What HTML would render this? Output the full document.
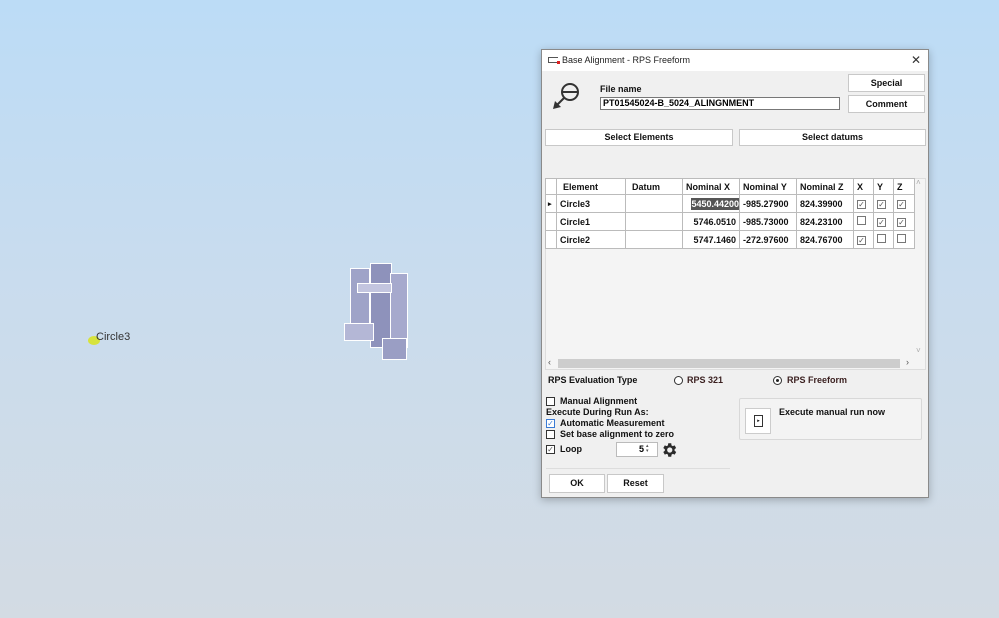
<!DOCTYPE html>
<html><head><meta charset="utf-8">
<style>
*{box-sizing:border-box;margin:0;padding:0}
body{width:999px;height:618px;overflow:hidden;position:relative;font-family:"Liberation Sans",Arial,sans-serif;background:linear-gradient(180deg,#bcdcf6 0%,#c9dcee 45%,#d3dbe3 100%);}
.abs{position:absolute}
.dlg{left:541px;top:49px;width:388px;height:449px;background:#f0f0f0;border:1px solid #8a8a8a;box-shadow:0 2px 8px rgba(0,0,0,.25)}
.title{left:0;top:0;width:386px;height:21px;background:#fff;font-size:9px;color:#222}
.btn{position:absolute;background:#fff;border:1px solid #c8c8c8;font-size:9px;font-weight:bold;text-align:center;color:#111}
.b{font-weight:bold;font-size:9px;color:#111}
.cb{position:absolute;width:9px;height:9px;border:1px solid #333;background:#fff}
table{border-collapse:collapse;font-size:9px;font-weight:bold;color:#111}
td{border:1px solid #bbb;height:18px;padding:0 3px;background:#fff;white-space:nowrap;overflow:hidden}
th{border:1px solid #bbb;height:16px;background:#fff;font-weight:bold;text-align:left;padding:0 6px}
.ck{display:inline-block;width:9px;height:9px;border:1px solid #777;font-size:8px;line-height:7px;text-align:center;color:#555;font-weight:normal}
</style></head><body>
<!-- 3D part -->
<div class="abs" style="left:342px;top:258px;width:70px;height:105px">
 <div class="abs" style="left:8px;top:10px;width:20px;height:70px;background:#9fa3c8;border:1px solid #fff"></div>
 <div class="abs" style="left:28px;top:5px;width:22px;height:85px;background:#8e92bb;border:1px solid #fff"></div>
 <div class="abs" style="left:48px;top:15px;width:18px;height:75px;background:#a6a9cd;border:1px solid #fff"></div>
 <div class="abs" style="left:2px;top:65px;width:30px;height:18px;background:#b4b7d6;border:1px solid #fff"></div>
 <div class="abs" style="left:40px;top:80px;width:25px;height:22px;background:#9a9ec4;border:1px solid #fff"></div>
 <div class="abs" style="left:15px;top:25px;width:35px;height:10px;background:#c3c5df;border:1px solid #fff"></div>
</div>
<div class="abs" style="left:88px;top:336px;width:12px;height:9px;border-radius:50%;background:#d7e33c"></div>
<div class="abs" style="left:96px;top:331px;font-size:11px;color:#333">Circle3</div>

<div class="abs dlg">
 <div class="abs title">
  <div class="abs" style="left:6px;top:7px;width:10px;height:6px;border:1px solid #555;border-right:none"></div>
  <div class="abs" style="left:15px;top:11px;width:3px;height:3px;background:#d22"></div>
  <div class="abs" style="left:20px;top:5px">Base Alignment - RPS Freeform</div>
  <div class="abs" style="left:369px;top:3px;font-size:12px;color:#333">✕</div>
 </div>
 <svg class="abs" style="left:10px;top:30px" width="32" height="32" viewBox="0 0 32 32"><circle cx="18" cy="12" r="8" fill="none" stroke="#333" stroke-width="2"/><line x1="11" y1="12" x2="25" y2="12" stroke="#333" stroke-width="2"/><line x1="12" y1="18" x2="3" y2="27" stroke="#333" stroke-width="2"/><path d="M1 29 L3 21 L9 27 Z" fill="#333"/></svg>
 <div class="abs b" style="left:58px;top:34px">File name</div>
 <div class="abs" style="left:58px;top:47px;width:240px;height:13px;background:#fff;border:1px solid #777;font-size:9px;font-weight:bold;padding-left:2px;line-height:11px">PT01545024-B_5024_ALINGNMENT</div>
 <div class="btn" style="left:306px;top:24px;width:77px;height:18px;line-height:16px">Special</div>
 <div class="btn" style="left:306px;top:45px;width:77px;height:18px;line-height:16px">Comment</div>
 <div class="btn" style="left:3px;top:79px;width:188px;height:17px;line-height:15px">Select Elements</div>
 <div class="btn" style="left:197px;top:79px;width:187px;height:17px;line-height:15px">Select datums</div>
 <div class="abs" style="left:3px;top:128px;width:381px;height:192px;background:#f4f4f4;border:1px solid #ddd"></div>
 <table class="abs" style="left:3px;top:128px;table-layout:fixed;width:369px">
  <colgroup><col style="width:11px"><col style="width:69px"><col style="width:57px"><col style="width:57px"><col style="width:57px"><col style="width:57px"><col style="width:20px"><col style="width:20px"><col style="width:21px"></colgroup>
  <tr><th></th><th>Element</th><th>Datum</th><th style="padding:0 3px">Nominal X</th><th style="padding:0 3px">Nominal Y</th><th style="padding:0 3px">Nominal Z</th><th style="padding:0 3px">X</th><th style="padding:0 3px">Y</th><th style="padding:0 3px">Z</th></tr>
  <tr><td style="font-size:7px;padding:0 2px">▸</td><td>Circle3</td><td></td><td style="padding:0;text-align:right"><span style="background:#555;color:#fff;padding:1px 0">5450.44200</span></td><td>-985.27900</td><td>824.39900</td><td><span class="ck">✓</span></td><td><span class="ck">✓</span></td><td><span class="ck">✓</span></td></tr>
  <tr><td></td><td>Circle1</td><td></td><td style="text-align:right">5746.0510</td><td>-985.73000</td><td>824.23100</td><td><span class="ck"></span></td><td><span class="ck">✓</span></td><td><span class="ck">✓</span></td></tr>
  <tr><td></td><td>Circle2</td><td></td><td style="text-align:right">5747.1460</td><td>-272.97600</td><td>824.76700</td><td><span class="ck">✓</span></td><td><span class="ck"></span></td><td><span class="ck"></span></td></tr>
 </table>
 <div class="abs" style="left:374px;top:128px;font-size:8px;color:#aaa">˄</div>
 <div class="abs" style="left:374px;top:296px;font-size:8px;color:#aaa">˅</div>
 <div class="abs" style="left:16px;top:309px;width:342px;height:9px;background:#cdcdcd"></div>
 <div class="abs" style="left:6px;top:307px;font-size:9px;color:#555">‹</div>
 <div class="abs" style="left:364px;top:307px;font-size:9px;color:#555">›</div>
 <div class="abs b" style="left:6px;top:325px">RPS Evaluation Type</div>
 <div class="abs" style="left:132px;top:326px;width:9px;height:9px;border:1px solid #333;border-radius:50%;background:#fff"></div>
 <div class="abs b" style="left:145px;top:325px;color:#3a1f1f">RPS 321</div>
 <div class="abs" style="left:231px;top:326px;width:9px;height:9px;border:1px solid #333;border-radius:50%;background:#fff"><div style="margin:2px;width:3px;height:3px;border-radius:50%;background:#222"></div></div>
 <div class="abs b" style="left:245px;top:325px;color:#3a1f1f">RPS Freeform</div>
 <div class="cb" style="left:4px;top:347px"></div><div class="abs b" style="left:18px;top:346px">Manual Alignment</div>
 <div class="abs b" style="left:4px;top:357px">Execute During Run As:</div>
 <div class="cb" style="left:4px;top:369px;border-color:#3a7bd5;color:#3a7bd5;font-size:8px;line-height:7px;text-align:center">✓</div><div class="abs b" style="left:18px;top:368px">Automatic Measurement</div>
 <div class="cb" style="left:4px;top:380px"></div><div class="abs b" style="left:18px;top:379px">Set base alignment to zero</div>
 <div class="cb" style="left:4px;top:395px;font-size:8px;line-height:7px;text-align:center;color:#555">✓</div><div class="abs b" style="left:18px;top:394px">Loop</div>
 <div class="abs" style="left:74px;top:392px;width:42px;height:15px;background:#fff;border:1px solid #bbb;font-size:9px;font-weight:bold;text-align:right;padding-right:13px;line-height:13px">5</div>
 <div class="abs" style="left:104px;top:394px;font-size:5px;line-height:5px;color:#555">▴<br>▾</div>
 <svg class="abs" style="left:118px;top:391px" width="18" height="18" viewBox="0 0 24 24"><path fill="#2b2b2b" d="M19.4 13a7.5 7.5 0 0 0 0-2l2.1-1.6-2-3.5-2.5 1a7 7 0 0 0-1.7-1L15 3h-4l-.4 2.9a7 7 0 0 0-1.7 1l-2.5-1-2 3.5L6.5 11a7.5 7.5 0 0 0 0 2l-2.1 1.6 2 3.5 2.5-1a7 7 0 0 0 1.7 1L11 21h4l.4-2.9a7 7 0 0 0 1.7-1l2.5 1 2-3.5zM13 15.5A3.5 3.5 0 1 1 13 8.5a3.5 3.5 0 0 1 0 7z"/></svg>
 <div class="abs" style="left:4px;top:418px;width:184px;height:1px;background:#ddd"></div>
 <div class="btn" style="left:7px;top:424px;width:56px;height:19px;line-height:17px">OK</div>
 <div class="btn" style="left:65px;top:424px;width:57px;height:19px;line-height:17px">Reset</div>
 <div class="abs" style="left:197px;top:348px;width:183px;height:42px;background:#f3f3f3;border:1px solid #d8d8d8;border-radius:2px"></div>
 <div class="abs" style="left:203px;top:358px;width:26px;height:26px;background:#fff;border:1px solid #ccc"><div style="margin:6px 8px;width:9px;height:12px;border:1px solid #333;font-size:5px;text-align:center;line-height:10px">▸</div></div>
 <div class="abs b" style="left:237px;top:357px">Execute manual run now</div>
</div>
</body></html>
